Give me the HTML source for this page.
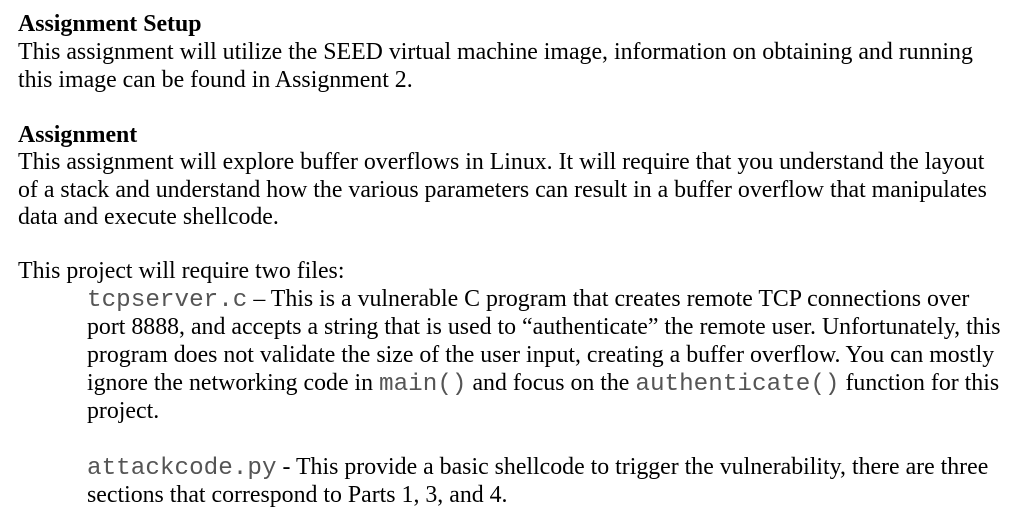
<!DOCTYPE html>
<html><head><meta charset="utf-8"><style>
html,body{margin:0;padding:0;background:#fff;}
body{width:1022px;height:532px;overflow:hidden;font-family:"Liberation Serif",serif;font-size:23.85px;color:#000;}
.l{position:absolute;left:18px;white-space:nowrap;line-height:28px;}
.i{left:87px;}
b{font-weight:bold;}
.m{font-family:"Liberation Mono",monospace;font-size:24.3px;color:#555;}
</style></head><body>
<div class="l" style="top:10px"><b>Assignment Setup</b></div>
<div class="l" style="top:38px">This assignment will utilize the SEED virtual machine image, information on obtaining and running</div>
<div class="l" style="top:66px">this image can be found in Assignment 2.</div>
<div class="l" style="top:121px"><b>Assignment</b></div>
<div class="l" style="top:148px">This assignment will explore buffer overflows in Linux. It will require that you understand the layout</div>
<div class="l" style="top:176px">of a stack and understand how the various parameters can result in a buffer overflow that manipulates</div>
<div class="l" style="top:203px">data and execute shellcode.</div>
<div class="l" style="top:257px">This project will require two files:</div>
<div class="l i" style="top:285px"><span class="m">tcpserver.c</span> – This is a vulnerable C program that creates remote TCP connections over</div>
<div class="l i" style="top:313px">port 8888, and accepts a string that is used to “authenticate” the remote user. Unfortunately, this</div>
<div class="l i" style="top:341px">program does not validate the size of the user input, creating a buffer overflow. You can mostly</div>
<div class="l i" style="top:369px">ignore the networking code in <span class="m">main()</span> and focus on the <span class="m">authenticate()</span> function for this</div>
<div class="l i" style="top:397px">project.</div>
<div class="l i" style="top:453px"><span class="m">attackcode.py</span> - This provide a basic shellcode to trigger the vulnerability, there are three</div>
<div class="l i" style="top:481px">sections that correspond to Parts 1, 3, and 4.</div>
</body></html>
